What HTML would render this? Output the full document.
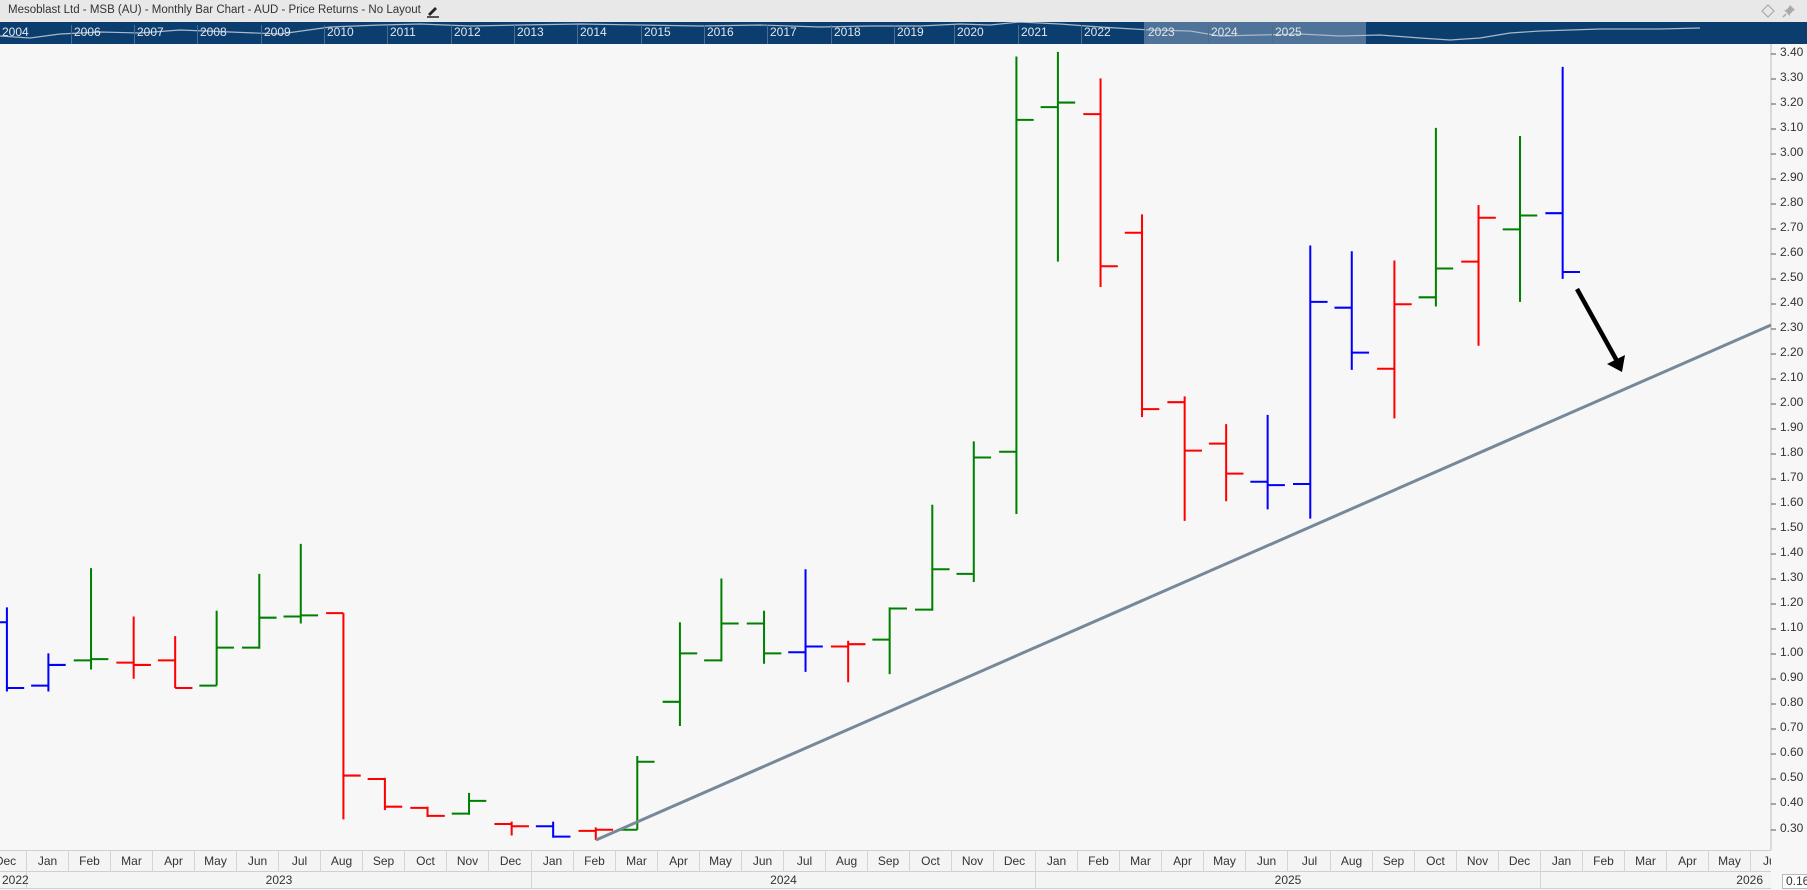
<!DOCTYPE html>
<html><head><meta charset="utf-8"><style>
*{margin:0;padding:0;box-sizing:border-box}
body{width:1807px;height:890px;overflow:hidden;background:#f7f7f7;font-family:"Liberation Sans",sans-serif;position:relative}
.t{position:absolute;white-space:nowrap}
#title{position:absolute;left:0;top:0;width:1807px;height:22px;background:#e8e8e8;font-size:11.5px;color:#333;padding:4px 0 0 8px}
#nav{position:absolute;left:0;top:22px;width:1807px;height:22px;background:#0b3e6f;overflow:hidden}
.ny{position:absolute;top:3px;font-size:12px;color:#e0e6ee;padding-left:2px;height:22px;border-left:1px solid #4b6d93}
#months{position:absolute;left:0;top:850px;width:1771px;height:22px;border-top:1px solid #cfcfcf;border-bottom:1px solid #cfcfcf;background:#f4f4f4}
.m{position:absolute;top:0;height:21px;width:42px;text-align:center;font-size:12px;color:#333;line-height:20px;border-right:1px solid #d4d4d4}
#years{position:absolute;left:0;top:872px;width:1771px;height:17px;border-bottom:1px solid #cfcfcf;background:#f4f4f4}
.y{position:absolute;top:0;height:17px;font-size:12px;color:#333;line-height:16px;border-right:1px solid #d4d4d4}
.p{position:absolute;left:1780px;font-size:12px;color:#333}
</style></head><body>
<div id="title">Mesoblast Ltd - MSB (AU) - Monthly Bar Chart - AUD - Price Returns - No Layout</div>
<svg width="14" height="14" style="position:absolute;left:426px;top:4px" viewBox="0 0 14 14"><path d="M2 10 L9 3 L11 5 L4 12 Z" fill="#222"/><path d="M1 13 L13 13" stroke="#222" stroke-width="1.5"/></svg>
<svg style="position:absolute;left:1761px;top:4px" width="14" height="14" viewBox="0 0 14 14"><path d="M7 1 L13 7 L7 13 L1 7 Z" fill="none" stroke="#aaa" stroke-width="1.2"/></svg>
<svg style="position:absolute;left:1781px;top:3px" width="16" height="16" viewBox="0 0 16 16"><path d="M9 2 L14 7 L12 8 L9 11 L9 13 L3 7 L5 7 L8 4 Z" fill="#aaa"/><path d="M5 11 L2 14" stroke="#aaa" stroke-width="1.5"/></svg>
<div id="nav">
<div style="position:absolute;left:1144px;top:0;width:222px;height:22px;background:#4f7399"></div>
<svg style="position:absolute;left:0;top:0" width="1807" height="22"><polyline fill="none" stroke="#aab8c8" stroke-width="1.2" points="0,14 30,16 60,12 100,10 140,11 180,8 230,10 280,12 330,5 380,3 420,2 470,4 520,3 580,2 640,3 700,4 760,3 820,5 870,4 920,4 960,2 990,3 1020,0 1060,2 1100,5 1150,8 1190,9 1220,14 1260,13 1300,12 1340,14 1380,13 1420,16 1450,18 1480,16 1510,11 1540,9 1600,7 1660,7 1700,6"/></svg>
<div class="ny" style="left:0;border:none">2004</div>
<div class="ny" style="left:71px">2006</div><div class="ny" style="left:134px">2007</div><div class="ny" style="left:197px">2008</div><div class="ny" style="left:261px">2009</div><div class="ny" style="left:324px">2010</div><div class="ny" style="left:387px">2011</div><div class="ny" style="left:451px">2012</div><div class="ny" style="left:514px">2013</div><div class="ny" style="left:577px">2014</div><div class="ny" style="left:641px">2015</div><div class="ny" style="left:704px">2016</div><div class="ny" style="left:767px">2017</div><div class="ny" style="left:831px">2018</div><div class="ny" style="left:894px">2019</div><div class="ny" style="left:954px">2020</div><div class="ny" style="left:1018px">2021</div><div class="ny" style="left:1081px">2022</div><div class="ny" style="left:1145px">2023</div><div class="ny" style="left:1208px">2024</div><div class="ny" style="left:1272px">2025</div>
</div>
<svg style="position:absolute;left:0;top:0" width="1807" height="890">
<line x1="1771" y1="44" x2="1771" y2="850" stroke="#bbb" stroke-width="1"/>
<g stroke="#555" stroke-width="1">
<line x1="1771" y1="54" x2="1776" y2="54"/><line x1="1771" y1="79" x2="1776" y2="79"/><line x1="1771" y1="104" x2="1776" y2="104"/><line x1="1771" y1="129" x2="1776" y2="129"/><line x1="1771" y1="154" x2="1776" y2="154"/><line x1="1771" y1="179" x2="1776" y2="179"/><line x1="1771" y1="204" x2="1776" y2="204"/><line x1="1771" y1="229" x2="1776" y2="229"/><line x1="1771" y1="254" x2="1776" y2="254"/><line x1="1771" y1="279" x2="1776" y2="279"/><line x1="1771" y1="304" x2="1776" y2="304"/><line x1="1771" y1="329" x2="1776" y2="329"/><line x1="1771" y1="354" x2="1776" y2="354"/><line x1="1771" y1="379" x2="1776" y2="379"/><line x1="1771" y1="404" x2="1776" y2="404"/><line x1="1771" y1="429" x2="1776" y2="429"/><line x1="1771" y1="454" x2="1776" y2="454"/><line x1="1771" y1="479" x2="1776" y2="479"/><line x1="1771" y1="504" x2="1776" y2="504"/><line x1="1771" y1="529" x2="1776" y2="529"/><line x1="1771" y1="554" x2="1776" y2="554"/><line x1="1771" y1="579" x2="1776" y2="579"/><line x1="1771" y1="604" x2="1776" y2="604"/><line x1="1771" y1="629" x2="1776" y2="629"/><line x1="1771" y1="654" x2="1776" y2="654"/><line x1="1771" y1="679" x2="1776" y2="679"/><line x1="1771" y1="704" x2="1776" y2="704"/><line x1="1771" y1="729" x2="1776" y2="729"/><line x1="1771" y1="754" x2="1776" y2="754"/><line x1="1771" y1="779" x2="1776" y2="779"/><line x1="1771" y1="804" x2="1776" y2="804"/><line x1="1771" y1="830" x2="1776" y2="830"/>
</g>
<g transform="scale(1.1524)" stroke-width="1.75" fill="none">
<g stroke="#0000ff">
<path d="M6 527V600M-9 540H6M6 597H21"/>
<path d="M42 567V600M27 595H42M42 577H57"/>
<path d="M480 713V727M465 717H480M480 726H495"/>
<path d="M699 494V583M684 566H699M699 561H714"/>
<path d="M1100 360V442M1085 418H1100M1100 421H1115"/>
<path d="M1137 213V450M1122 420H1137M1137 262H1152"/>
<path d="M1173 218V321M1158 267H1173M1173 306H1188"/>
<path d="M1356 58V242M1341 185H1356M1356 236H1371"/>
</g>
<g stroke="#008000">
<path d="M79 493V581M64 573H79M79 572H94"/>
<path d="M188 530V595M173 595H188M188 562H203"/>
<path d="M225 498V563M210 562H225M225 536H240"/>
<path d="M261 472V541M246 535H261M261 534H276"/>
<path d="M407 688V707M392 706H407M407 695H422"/>
<path d="M553 656V720M538 720H553M553 661H568"/>
<path d="M590 540V630M575 609H590M590 567H605"/>
<path d="M626 502V574M611 573H626M626 541H641"/>
<path d="M663 530V576M648 541H663M663 567H678"/>
<path d="M772 527V585M757 555H772M772 528H787"/>
<path d="M809 438V530M794 529H809M809 494H824"/>
<path d="M845 383V505M830 498H845M845 397H860"/>
<path d="M882 49V446M867 392H882M882 104H897"/>
<path d="M918 45V227M903 93H918M918 89H933"/>
<path d="M1246 111V266M1231 258H1246M1246 233H1261"/>
<path d="M1319 118V262M1304 199H1319M1319 187H1334"/>
</g>
<g stroke="#ff0000">
<path d="M116 535V589M101 575H116M116 577H131"/>
<path d="M152 552V597M137 573H152M152 597H167"/>
<path d="M298 532V711M283 532H298M298 673H313"/>
<path d="M334 675V703M319 676H334M334 700H349"/>
<path d="M371 700V709M356 701H371M371 708H386"/>
<path d="M444 713V725M429 715H444M444 717H459"/>
<path d="M517 718V729M502 721H517M517 720H532"/>
<path d="M736 556V592M721 561H736M736 559H751"/>
<path d="M955 68V249M940 99H955M955 231H970"/>
<path d="M991 186V362M976 202H991M991 355H1006"/>
<path d="M1028 344V452M1013 349H1028M1028 391H1043"/>
<path d="M1064 368V435M1049 385H1064M1064 411H1079"/>
<path d="M1210 226V363M1195 320H1210M1210 264H1225"/>
<path d="M1283 178V300M1268 227H1283M1283 189H1298"/>
</g>
</g>
<line x1="596" y1="840" x2="1771" y2="325" stroke="#778899" stroke-width="3"/>
<line x1="1577" y1="289" x2="1617" y2="361" stroke="#000" stroke-width="4.5"/>
<path d="M1607 364 L1625 355 L1622 372 Z" fill="#000"/>
</svg>
<div style="position:absolute;left:1772px;top:44px;width:35px;height:806px;overflow:hidden">
<div class="p" style="left:8px;top:1px">3.40</div>
<div class="p" style="left:8px;top:26px">3.30</div><div class="p" style="left:8px;top:51px">3.20</div><div class="p" style="left:8px;top:76px">3.10</div><div class="p" style="left:8px;top:101px">3.00</div><div class="p" style="left:8px;top:126px">2.90</div><div class="p" style="left:8px;top:151px">2.80</div><div class="p" style="left:8px;top:176px">2.70</div><div class="p" style="left:8px;top:201px">2.60</div><div class="p" style="left:8px;top:226px">2.50</div><div class="p" style="left:8px;top:251px">2.40</div><div class="p" style="left:8px;top:276px">2.30</div><div class="p" style="left:8px;top:301px">2.20</div><div class="p" style="left:8px;top:326px">2.10</div><div class="p" style="left:8px;top:351px">2.00</div><div class="p" style="left:8px;top:376px">1.90</div><div class="p" style="left:8px;top:401px">1.80</div><div class="p" style="left:8px;top:426px">1.70</div><div class="p" style="left:8px;top:451px">1.60</div><div class="p" style="left:8px;top:476px">1.50</div><div class="p" style="left:8px;top:501px">1.40</div><div class="p" style="left:8px;top:526px">1.30</div><div class="p" style="left:8px;top:551px">1.20</div><div class="p" style="left:8px;top:576px">1.10</div><div class="p" style="left:8px;top:601px">1.00</div><div class="p" style="left:8px;top:626px">0.90</div><div class="p" style="left:8px;top:651px">0.80</div><div class="p" style="left:8px;top:676px">0.70</div><div class="p" style="left:8px;top:701px">0.60</div><div class="p" style="left:8px;top:726px">0.50</div><div class="p" style="left:8px;top:751px">0.40</div><div class="p" style="left:8px;top:777px">0.30</div>
</div>
<div id="months">
<div class="m" style="left:-15px">Dec</div><div class="m" style="left:27px">Jan</div><div class="m" style="left:69px">Feb</div><div class="m" style="left:111px">Mar</div><div class="m" style="left:153px">Apr</div><div class="m" style="left:195px">May</div><div class="m" style="left:237px">Jun</div><div class="m" style="left:279px">Jul</div><div class="m" style="left:321px">Aug</div><div class="m" style="left:363px">Sep</div><div class="m" style="left:405px">Oct</div><div class="m" style="left:447px">Nov</div><div class="m" style="left:490px">Dec</div><div class="m" style="left:532px">Jan</div><div class="m" style="left:574px">Feb</div><div class="m" style="left:616px">Mar</div><div class="m" style="left:658px">Apr</div><div class="m" style="left:700px">May</div><div class="m" style="left:742px">Jun</div><div class="m" style="left:784px">Jul</div><div class="m" style="left:826px">Aug</div><div class="m" style="left:868px">Sep</div><div class="m" style="left:910px">Oct</div><div class="m" style="left:952px">Nov</div><div class="m" style="left:994px">Dec</div><div class="m" style="left:1036px">Jan</div><div class="m" style="left:1078px">Feb</div><div class="m" style="left:1120px">Mar</div><div class="m" style="left:1162px">Apr</div><div class="m" style="left:1204px">May</div><div class="m" style="left:1246px">Jun</div><div class="m" style="left:1289px">Jul</div><div class="m" style="left:1331px">Aug</div><div class="m" style="left:1373px">Sep</div><div class="m" style="left:1415px">Oct</div><div class="m" style="left:1457px">Nov</div><div class="m" style="left:1499px">Dec</div><div class="m" style="left:1541px">Jan</div><div class="m" style="left:1583px">Feb</div><div class="m" style="left:1625px">Mar</div><div class="m" style="left:1667px">Apr</div><div class="m" style="left:1709px">May</div><div class="m" style="left:1751px;width:20px;text-align:left;padding-left:12px;border:none;overflow:hidden">Jun</div>
</div>
<div id="years">
<div class="y" style="left:0;width:27px;padding-left:2px">2022</div>
<div class="y" style="left:27px;width:505px;text-align:center">2023</div>
<div class="y" style="left:532px;width:504px;text-align:center">2024</div>
<div class="y" style="left:1036px;width:505px;text-align:center">2025</div>
<div class="y" style="left:1541px;width:230px;text-align:right;padding-right:8px;border:none">2026</div>
</div>
<div class="t" style="left:1782px;top:874px;width:30px;height:15px;border:1px solid #bbb;background:#fff;font-size:12px;line-height:13px;padding-left:3px;color:#333">0.165</div>
</body></html>
